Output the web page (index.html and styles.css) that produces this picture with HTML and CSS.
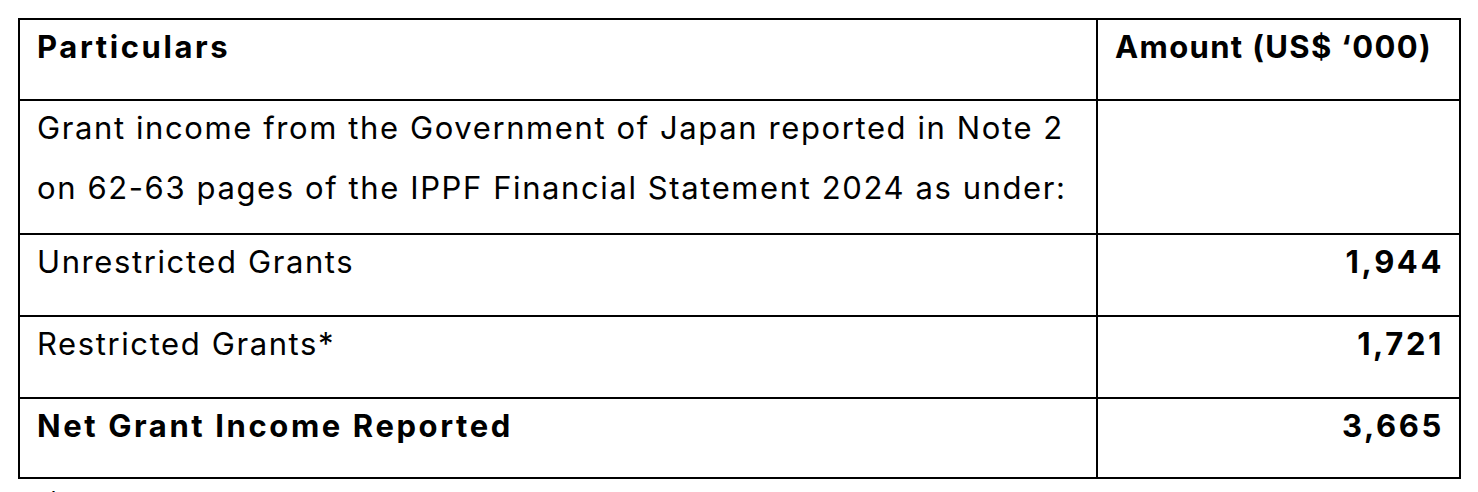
FILE: index.html
```html
<!DOCTYPE html>
<html lang="en">
<head>
<meta charset="utf-8">
<title>Grant income</title>
<link rel="stylesheet" href="styles.css">
</head>
<body>
<table class="grants">
  <colgroup>
    <col class="col-part">
    <col class="col-amt">
  </colgroup>
  <tr class="row-head">
    <td class="bold">Particulars</td>
    <td class="bold head-amt">Amount (US$ ‘000)</td>
  </tr>
  <tr class="row-intro">
    <td>
      <div class="line">Grant income from the Government of Japan reported in Note 2</div>
      <div class="line">on 62-63 pages of the IPPF Financial Statement 2024 as under:</div>
    </td>
    <td></td>
  </tr>
  <tr class="row-a">
    <td>Unrestricted Grants</td>
    <td class="bold num">1,944</td>
  </tr>
  <tr class="row-b">
    <td>Restricted Grants*</td>
    <td class="bold num">1,721</td>
  </tr>
  <tr class="row-total">
    <td class="bold">Net Grant Income Reported</td>
    <td class="bold num">3,665</td>
  </tr>
</table>
<div class="footnote">*</div>
</body>
</html>
```
FILE: styles.css
```css
html, body {
  background: #fff;
}
body {
  margin: 18px 0 0 18px;
  font-family: Inter, "Liberation Sans", sans-serif;
  color: #000;
  overflow: hidden;
}
.grants {
  border-collapse: collapse;
  table-layout: fixed;
  width: 1441px;
}
.col-part { width: 1078px; }
.col-amt { width: 363px; }
.grants td {
  border: 2px solid #000;
  vertical-align: top;
  padding: 0 15px 0 17px;
  font-size: 31px;
  line-height: 54px;
  letter-spacing: 1.6px;
  white-space: nowrap;
}
.line + .line { margin-top: 6px; }
.grants td.bold { font-weight: 700; letter-spacing: 2.6px; }
.grants td.head-amt { letter-spacing: 1.35px; }
.num { text-align: right; }
.row-head td { height: 79px; }
.row-intro td { height: 132px; }
.row-a td { height: 80px; }
.row-b td { height: 80px; }
.row-total td { height: 78px; }
.footnote {
  font-size: 30px;
  line-height: 30px;
  padding-left: 28px;
  margin-top: 8px;
}
```
